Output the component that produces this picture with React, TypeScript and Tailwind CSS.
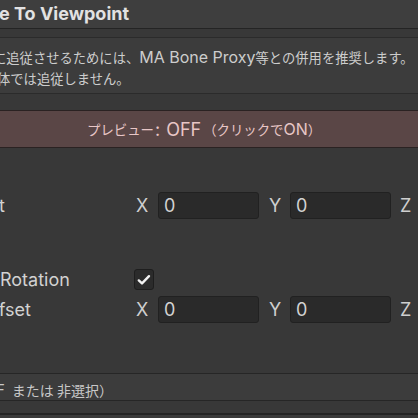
import React from "react";

const LAT = "font-['Inter','Noto_Sans_CJK_JP',sans-serif]";
const CJK = "font-['Noto_Sans_CJK_JP',sans-serif]";

function J({ children, size = "text-[13px]", extra = "" }: { children: React.ReactNode; size?: string; extra?: string }) {
  return <span className={`${CJK} ${size} ${extra}`}>{children}</span>;
}

function Field({ value }: { value: string }) {
  return (
    <div className="w-[101px] h-[27px] rounded-[3px] bg-[#2a2a2a] border border-[#212121] flex items-center pl-[5px] text-[18px] text-[#d2d2d2]">
      {value}
    </div>
  );
}

function Vec3() {
  return (
    <div className="flex items-center h-[27px] ml-[134px] text-[18px] text-[#cfcfcf]">
      <span className="w-[24px] pl-[2px]">X</span>
      <Field value="0" />
      <span className="w-[21px] ml-[10px]">Y</span>
      <Field value="0" />
      <span className="ml-[9px]">Z</span>
    </div>
  );
}

export default function App() {
  return (
    <div className={`w-[418px] h-[418px] overflow-hidden bg-[#383838] ${LAT} text-[#d2d2d2] flex flex-col`}>
      {/* component header */}
      <div className="h-[29px] shrink-0 bg-[#3e3e3e] border-b border-[#242424] flex items-center whitespace-nowrap">
        <span className="-ml-[1px] text-[18px] font-bold text-[#e2e2e2] leading-none">e To Viewpoint</span>
      </div>

      {/* help box */}
      <div className="mt-[8px] h-[57px] shrink-0 -mx-[4px] bg-[#3c3c3c] border border-[#2b2b2b] pt-[9px] pl-[4px] text-[16px] leading-[20px] text-[#cdcdcd] whitespace-nowrap">
        <div className="-ml-[8px]">
          <J size="text-[13.3px]">に追従させるためには、</J>MA Bone Proxy<J size="text-[13.3px]">等との併用を推奨します。</J>
        </div>
        <div className="-ml-[4px]">
          <J size="text-[13.3px]">体では追従しません。</J>
        </div>
      </div>

      {/* preview button */}
      <div className="mt-[16px] h-[38px] shrink-0 bg-[#5a4646] border-y border-[#2a2222] flex items-center pl-[87px] text-[18px] text-[#e8c6c6] whitespace-nowrap">
        <J size="text-[13.4px]">プレビュー</J>
        <span className="ml-[1px]">:</span>
        <span className="ml-[6px]">OFF</span>
        <J size="text-[13.4px]" extra="ml-[2px]">（クリックで</J>
        <span className="text-[16px]">ON</span>
        <J size="text-[13.4px]">）</J>
      </div>

      {/* position row */}
      <div className="mt-[44px] flex items-center h-[27px] shrink-0 relative">
        <span className="absolute -left-[1px] text-[18px] text-[#d2d2d2]">t</span>
        <Vec3 />
      </div>

      {/* rotation checkbox row */}
      <div className="mt-[47px] flex items-center h-[27px] shrink-0 relative">
        <span className="absolute left-0 text-[18px] text-[#d2d2d2]">Rotation</span>
        <div className="ml-[134px] w-[20px] h-[21px] rounded-[3px] bg-[#2b2b2b] border border-[#1e1e1e] flex items-center justify-center">
          <svg width="14" height="12" viewBox="0 0 14 12" fill="none">
            <path d="M1.8 6.4 L5 9.4 L12 2.2" stroke="#f2f2f2" strokeWidth="2.4" strokeLinecap="round" strokeLinejoin="round" />
          </svg>
        </div>
      </div>

      {/* offset row */}
      <div className="mt-[3px] flex items-center h-[27px] shrink-0 relative">
        <span className="absolute -left-[21px] text-[18px] text-[#d2d2d2]">Offset</span>
        <Vec3 />
      </div>

      {/* bottom status bar */}
      <div className="mt-[50px] h-[28px] shrink-0 bg-[#3c3c3c] border-y border-[#262626] flex items-center pt-[6px] text-[15px] text-[#c8c8c8] whitespace-nowrap">
        <span className="-ml-[4px]">F</span>
        <J size="text-[14px]" extra="ml-[7px]">または 非選択）</J>
      </div>

      <div className="h-[14px] shrink-0 bg-[#383838] border-b-2 border-[#242424]" />
      <div className="flex-1 bg-[#3a3a3a]" />
    </div>
  );
}
